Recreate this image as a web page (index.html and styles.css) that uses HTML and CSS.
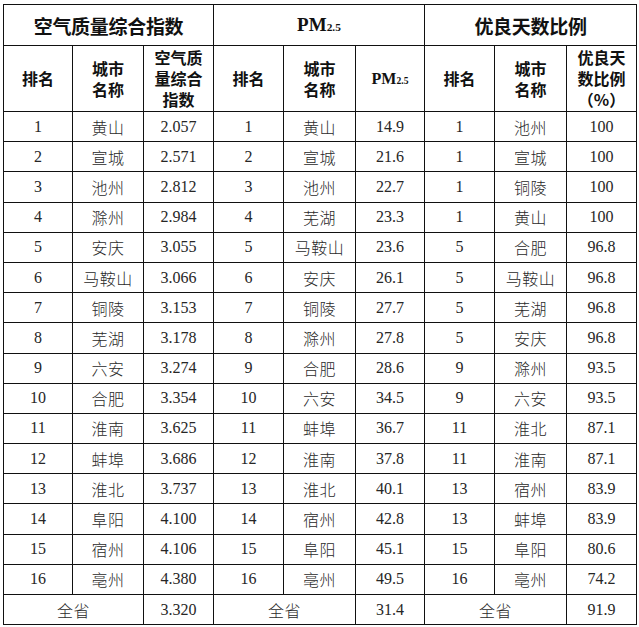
FILE: index.html
```html
<!DOCTYPE html>
<html lang="zh">
<head>
<meta charset="utf-8">
<link rel="stylesheet" href="styles.css">
</head>
<body>
<table class="rank">
  <colgroup>
    <col class="c69"><col class="c71"><col class="c70">
    <col class="c70"><col class="c72"><col class="c69">
    <col class="c70"><col class="c72"><col class="c70">
  </colgroup>
  <thead>
    <tr class="h1">
      <th colspan="3" class="cjk">空气质量综合指数</th>
      <th colspan="3" class="pm">PM<span class="sub">2.5</span></th>
      <th colspan="3" class="cjk">优良天数比例</th>
    </tr>
    <tr class="h2">
      <th class="cjk">排名</th><th class="cjk">城市<br>名称</th><th class="cjk">空气质<br>量综合<br>指数</th>
      <th class="cjk">排名</th><th class="cjk">城市<br>名称</th><th class="pm2">PM<span class="sub">2.5</span></th>
      <th class="cjk">排名</th><th class="cjk">城市<br>名称</th><th class="cjk pct">优良天<br>数比例<br>（%）</th>
    </tr>
  </thead>
  <tbody>
    <tr><td>1</td><td class="city">黄山</td><td>2.057</td><td>1</td><td class="city">黄山</td><td>14.9</td><td>1</td><td class="city">池州</td><td>100</td></tr>
    <tr><td>2</td><td class="city">宣城</td><td>2.571</td><td>2</td><td class="city">宣城</td><td>21.6</td><td>1</td><td class="city">宣城</td><td>100</td></tr>
    <tr><td>3</td><td class="city">池州</td><td>2.812</td><td>3</td><td class="city">池州</td><td>22.7</td><td>1</td><td class="city">铜陵</td><td>100</td></tr>
    <tr><td>4</td><td class="city">滁州</td><td>2.984</td><td>4</td><td class="city">芜湖</td><td>23.3</td><td>1</td><td class="city">黄山</td><td>100</td></tr>
    <tr><td>5</td><td class="city">安庆</td><td>3.055</td><td>5</td><td class="city">马鞍山</td><td>23.6</td><td>5</td><td class="city">合肥</td><td>96.8</td></tr>
    <tr><td>6</td><td class="city">马鞍山</td><td>3.066</td><td>6</td><td class="city">安庆</td><td>26.1</td><td>5</td><td class="city">马鞍山</td><td>96.8</td></tr>
    <tr><td>7</td><td class="city">铜陵</td><td>3.153</td><td>7</td><td class="city">铜陵</td><td>27.7</td><td>5</td><td class="city">芜湖</td><td>96.8</td></tr>
    <tr><td>8</td><td class="city">芜湖</td><td>3.178</td><td>8</td><td class="city">滁州</td><td>27.8</td><td>5</td><td class="city">安庆</td><td>96.8</td></tr>
    <tr><td>9</td><td class="city">六安</td><td>3.274</td><td>9</td><td class="city">合肥</td><td>28.6</td><td>9</td><td class="city">滁州</td><td>93.5</td></tr>
    <tr><td>10</td><td class="city">合肥</td><td>3.354</td><td>10</td><td class="city">六安</td><td>34.5</td><td>9</td><td class="city">六安</td><td>93.5</td></tr>
    <tr><td>11</td><td class="city">淮南</td><td>3.625</td><td>11</td><td class="city">蚌埠</td><td>36.7</td><td>11</td><td class="city">淮北</td><td>87.1</td></tr>
    <tr><td>12</td><td class="city">蚌埠</td><td>3.686</td><td>12</td><td class="city">淮南</td><td>37.8</td><td>11</td><td class="city">淮南</td><td>87.1</td></tr>
    <tr><td>13</td><td class="city">淮北</td><td>3.737</td><td>13</td><td class="city">淮北</td><td>40.1</td><td>13</td><td class="city">宿州</td><td>83.9</td></tr>
    <tr><td>14</td><td class="city">阜阳</td><td>4.100</td><td>14</td><td class="city">宿州</td><td>42.8</td><td>13</td><td class="city">蚌埠</td><td>83.9</td></tr>
    <tr><td>15</td><td class="city">宿州</td><td>4.106</td><td>15</td><td class="city">阜阳</td><td>45.1</td><td>15</td><td class="city">阜阳</td><td>80.6</td></tr>
    <tr><td>16</td><td class="city">亳州</td><td>4.380</td><td>16</td><td class="city">亳州</td><td>49.5</td><td>16</td><td class="city">亳州</td><td>74.2</td></tr>
    <tr><td colspan="2" class="city">全省</td><td>3.320</td><td colspan="2" class="city">全省</td><td>31.4</td><td colspan="2" class="city">全省</td><td>91.9</td></tr>
  </tbody>
</table>
</body>
</html>
```
FILE: styles.css
```css
html, body {
  margin: 0;
  padding: 0;
  background: #ffffff;
}
body {
  padding: 4px 0 0 3px;
}
.rank {
  border-collapse: collapse;
  table-layout: fixed;
  width: 634px;
  font-family: "Liberation Serif", "Times New Roman", serif;
  color: #262626;
}
.c69 { width: 69px; }
.c70 { width: 70px; }
.c71 { width: 71px; }
.c72 { width: 72px; }
.rank th, .rank td {
  border: 1px solid #111;
  padding: 0;
  text-align: center;
  vertical-align: middle;
}
.rank th {
  font-weight: 700;
}
.h1 { height: 41px; }
.h2 { height: 66px; }
.h1 .cjk {
  font-family: "Noto Sans CJK SC", sans-serif;
  font-size: 19px;
  letter-spacing: -0.3px;
  color: #111;
}
.h1 .pm {
  font-size: 19px;
  color: #111;
}
.h2 .cjk {
  font-family: "Noto Sans CJK SC", sans-serif;
  font-size: 16px;
  line-height: 21px;
  color: #111;
}
.h2 .pct {
  text-spacing-trim: space-all;
}
.h2 .pm2 {
  font-size: 16px;
  color: #111;
}
.sub {
  font-size: 0.6em;
}
.rank tbody tr {
  height: 30.19px;
}
.rank td {
  font-size: 16px;
  line-height: 18px;
}
.rank td.city {
  font-family: "Noto Sans CJK SC", sans-serif;
  font-weight: 300;
  font-size: 16px;
  color: #2a2a2a;
  letter-spacing: 0.5px;
}
```
